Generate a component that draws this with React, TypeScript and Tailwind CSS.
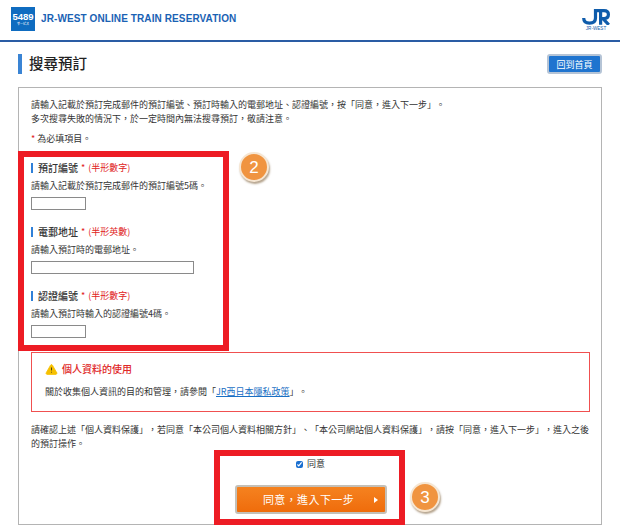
import { AlertTriangle } from "lucide-react";

const fields = [
  { label: "預訂編號", hint: "(半形數字)", desc: "請輸入記載於預訂完成郵件的預訂編號5碼。", width: "w-[55px]" },
  { label: "電郵地址", hint: "(半形英數)", desc: "請輸入預訂時的電郵地址。", width: "w-[163px]" },
  { label: "認證編號", hint: "(半形數字)", desc: "請輸入預訂時輸入的認證編號4碼。", width: "w-[55px]" },
];

const Badge = ({ n, className }: { n: number; className: string }) => (
  <div
    className={`absolute w-[30px] h-[30px] rounded-full bg-[#f09440] border-2 border-[#f6e6d2] shadow-[1px_2px_2px_rgba(120,90,50,0.55)] flex items-center justify-center text-white text-[17px] leading-none font-['Liberation_Sans',sans-serif] ${className}`}
  >
    {n}
  </div>
);

const App = () => {
  return (
    <div
      lang="zh-TW"
      className="relative w-[620px] h-[530px] overflow-hidden bg-white text-[#333] text-[9px] leading-[14px] [text-spacing-trim:space-all] font-['Noto_Sans_CJK_TC','Liberation_Sans',sans-serif]"
    >
      {/* Header */}
      <header className="h-[42px] flex items-center justify-between pl-[11px] pr-[10px] border-b-2 border-[#2a5ca4]">
        <div className="flex items-center gap-[6px] pb-[2px]">
          <div className="w-[24px] h-[24px] bg-[#0f6cc0] flex flex-col items-center justify-center text-white font-['Liberation_Sans',sans-serif] font-bold">
            <span className="text-[9.5px] leading-[10px]">5489</span>
            <span className="text-[3px] leading-[4px]">サービス</span>
          </div>
          <span className="text-[10px] font-bold tracking-[0.1px] text-[#1a62b4] font-['Liberation_Sans',sans-serif]">
            JR-WEST ONLINE TRAIN RESERVATION
          </span>
        </div>
        <div className="flex flex-col items-center">
          <svg width="28" height="16" viewBox="0 0 28 16" fill="none" stroke="#0f5cab" strokeWidth="3.2">
            <path d="M1.7 9 C1.7 12.5 4 14.2 7.5 14.2 C11 14.2 13.5 12.5 13.5 9 V0" />
            <path d="M13.5 1.7 H22 C25 1.7 26.4 3.5 26.4 5.6 C26.4 8 25 9.6 22 9.6 H18.6 M21 9.6 L26.8 15.8 M18.6 1.7 V15.8" />
          </svg>
          <span className="text-[4.6px] leading-[6px] mt-[1px] text-[#0f5cab] font-['Liberation_Sans',sans-serif]">JR-WEST</span>
        </div>
      </header>

      {/* Title row */}
      <div className="flex items-center justify-between mt-[12px] ml-[18px] mr-[18px]">
        <h1 className="h-[20px] border-l-[4px] border-[#3a84d4] pl-[7px] text-[14.5px] leading-[18px] font-medium text-[#222]">
          搜尋預訂
        </h1>
        <button className="w-[55px] h-[20px] rounded-[3px] bg-[#1f74cf] border-2 border-[#b5c4d6] text-white text-[9px] leading-none">
          回到首頁
        </button>
      </div>

      {/* Main box */}
      <div className="mt-[13px] mx-[18px] h-[438px] border border-[#b4b4b4] pt-[10px] pl-[12px] pr-[11px]">
        <p>請輸入記載於預訂完成郵件的預訂編號、預訂時輸入的電郵地址、認證編號，按「同意，進入下一步」。</p>
        <p>多次搜尋失敗的情況下，於一定時間內無法搜尋預訂，敬請注意。</p>
        <p className="mt-[6px]">
          <span className="text-[#e02020]">*</span> 為必填項目。
        </p>

        <div className="mt-[15px] flex flex-col gap-[15px]">
          {fields.map(f => (
            <div key={f.label}>
              <div className="h-[14px] flex items-center">
                <span className="w-[2px] h-[10px] shrink-0 bg-[#2f80d8] mr-[5px]" />
                <span className="text-[10px] text-[#333] font-medium">{f.label}</span>
                <span className="text-[#e02020] ml-[3px]">*</span>
                <span className="text-[#e02020] ml-[3px]">{f.hint}</span>
              </div>
              <p className="mt-[4px]">{f.desc}</p>
              <input className={`block mt-[4px] h-[13px] border border-[#8a8a8a] bg-white ${f.width}`} />
            </div>
          ))}
        </div>

        <div className="mt-[14px] w-[559px] h-[60px] border border-[#f05050] pl-[13px] pt-[8px]">
          <div className="flex items-center gap-[4px] text-[#e02828] text-[10px] font-medium h-[16px]">
            <AlertTriangle size={13} fill="#f6c000" stroke="#f6c000" strokeWidth={1.5} className="[&>path:nth-child(2)]:stroke-[#222] [&>path:nth-child(3)]:stroke-[#222]" />
            個人資料的使用
          </div>
          <p className="mt-[8px]">
            關於收集個人資訊的目的和管理，請參閱「<a href="#" className="text-[#1a6fc4] underline">JR西日本隱私政策</a>」。
          </p>
        </div>

        <p className="mt-[11px]">
          請確認上述「個人資料保護」，若同意「本公司個人資料相關方針」、「本公司網站個人資料保護」，請按「同意，進入下一步」，進入之後的預訂操作。
        </p>

        <div className="mt-[6px] flex flex-col items-center">
          <label className="flex items-center gap-[4px] h-[14px]">
            <input type="checkbox" defaultChecked readOnly className="w-[7px] h-[7px] m-0 accent-[#1a6fd0]" />
            同意
          </label>
          <button className="relative mt-[14px] w-[152px] h-[29px] rounded-[3px] border-2 border-[#c4c0b8] bg-gradient-to-b from-[#f5821f] to-[#ef6c0a] text-white text-[11px] leading-none tracking-[0.4px]">
            <span className="pr-[4px]">同意，進入下一步</span>
            <span className="absolute right-[7px] top-[10px] w-0 h-0 border-y-[3px] border-y-transparent border-l-[4px] border-l-white" />
          </button>
        </div>
      </div>

      {/* Annotations */}
      <div className="absolute left-[18px] top-[151px] w-[211px] h-[200px] border-[6px] border-[#ed1c24]" />
      <div className="absolute left-[214px] top-[450px] w-[191px] h-[75px] border-[6px] border-[#ed1c24]" />
      <Badge n={2} className="left-[239px] top-[152px]" />
      <Badge n={3} className="left-[410px] top-[482px]" />
    </div>
  );
};

export default App;
